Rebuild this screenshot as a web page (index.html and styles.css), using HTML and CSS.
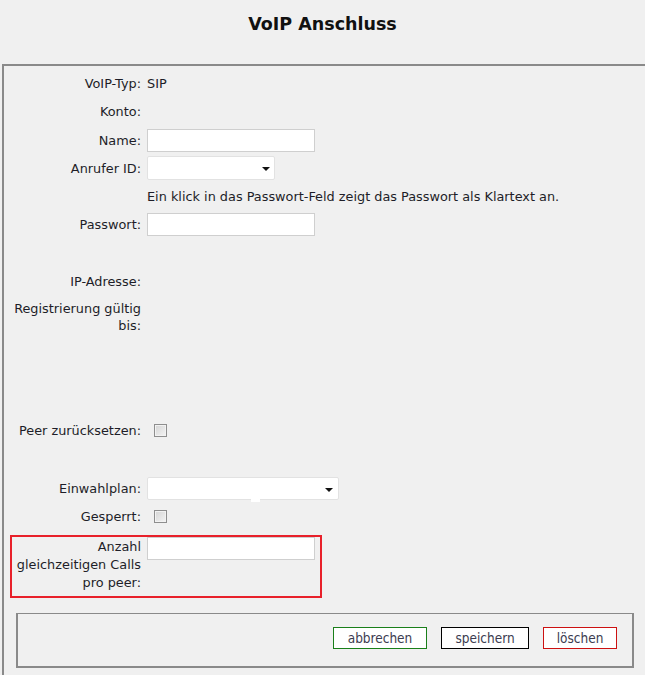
FILE: index.html
```
<!DOCTYPE html>
<html lang="de">
<head>
<meta charset="utf-8">
<title>VoIP Anschluss</title>
<link rel="stylesheet" href="styles.css">
</head>
<body>
<h1 class="title">VoIP Anschluss</h1>
<div class="panel">
  <div class="row"><span class="label">VoIP-Typ:</span><span class="value">SIP</span></div>
  <div class="row row-konto"><span class="label">Konto:</span></div>
  <div class="row"><span class="label">Name:</span><input class="text" type="text"></div>
  <div class="row"><span class="label">Anrufer ID:</span><span class="select sel-short"><span class="arrow"></span></span></div>
  <div class="row"><span class="label"></span><span class="value">Ein klick in das Passwort-Feld zeigt das Passwort als Klartext an.</span></div>
  <div class="row"><span class="label">Passwort:</span><input class="text" type="text"></div>
  <div class="spacer s1"></div>
  <div class="row"><span class="label">IP-Adresse:</span></div>
  <div class="row row-top"><span class="label multi">Registrierung gültig<br>bis:</span></div>
  <div class="spacer s2"></div>
  <div class="row"><span class="label">Peer zurücksetzen:</span><span class="check"></span></div>
  <div class="spacer s3"></div>
  <div class="row"><span class="label">Einwahlplan:</span><span class="select sel-long"><span class="arrow"></span><span class="nub"></span></span></div>
  <div class="row"><span class="label">Gesperrt:</span><span class="check"></span></div>
  <div class="redbox">
    <span class="label multi tall">Anzahl<br>gleichzeitigen Calls<br>pro peer:</span>
    <input class="text" type="text">
  </div>
  <div class="actions">
    <button class="btn btn-cancel" type="button">abbrechen</button>
    <button class="btn btn-save" type="button">speichern</button>
    <button class="btn btn-delete" type="button">löschen</button>
  </div>
</div>
</body>
</html>
```
FILE: styles.css
```
html, body {
  margin: 0;
  padding: 0;
  background: #f0f0f0;
  overflow: hidden;
  height: 675px;
}
body {
  font-family: "DejaVu Sans", sans-serif;
  font-size: 12.85px;
  color: #1e1e28;
}
.title {
  margin: 0;
  height: 64px;
  box-sizing: border-box;
  padding-top: 13px;
  text-align: center;
  font-size: 17.5px;
  line-height: 22px;
  font-weight: bold;
  color: #111;
}
.panel {
  margin-left: 2px;
  margin-right: -30px;
  border: 2px solid #8a8a8a;
  padding: 3px 0 8px 0;
}
.row {
  display: flex;
  align-items: center;
  height: 28px;
  gap: 6px;
}
.row-konto {
  height: 29px;
}
.row-top {
  align-items: flex-start;
  height: auto;
  padding-top: 5px;
}
.label {
  width: 137px;
  flex: none;
  text-align: right;
  white-space: nowrap;
}
.multi {
  line-height: 17px;
}
.tall {
  line-height: 18px;
  width: 129px;
  padding-top: 1px;
}
.spacer.s1 { height: 29px; }
.spacer.s2 { height: 82px; }
.spacer.s3 { height: 30px; }
.text {
  box-sizing: border-box;
  width: 168px;
  height: 23px;
  margin: 0;
  border: 1px solid #cfcfcf;
  background: #fff;
  padding: 0 3px;
  font: inherit;
}
.select {
  position: relative;
  box-sizing: border-box;
  height: 24px;
  border: 1px solid #e2e2e2;
  background: #fff;
  border-radius: 2px;
}
.sel-short { width: 128px; }
.sel-long { width: 192px; height: 23px; }
.arrow {
  position: absolute;
  right: 4px;
  top: 10px;
  width: 0;
  height: 0;
  border-left: 4px solid transparent;
  border-right: 4px solid transparent;
  border-top: 4px solid #111;
}
.sel-long .arrow { right: 5px; }
.nub {
  position: absolute;
  left: 103px;
  bottom: -3px;
  width: 9px;
  height: 3px;
  background: #fff;
}
.check {
  box-sizing: border-box;
  width: 13px;
  height: 13px;
  margin-left: 7px;
  border: 1px solid #8e8e8e;
  background: linear-gradient(135deg, #d4d4d4, #f4f4f4);
  box-shadow: inset 0 0 0 1px #f2f2f2;
}
.redbox {
  display: flex;
  align-items: flex-start;
  gap: 6px;
  box-sizing: border-box;
  width: 312px;
  margin: 5px 0 0 6px;
  border: 2px solid #e8202a;
  padding-bottom: 4px;
}
.actions {
  box-sizing: border-box;
  width: 618px;
  height: 55px;
  margin: 15px 0 0 12px;
  border: 2px solid #8a8a8a;
  border-width: 1px 2px 2px 2px;
  display: flex;
  justify-content: flex-end;
  align-items: flex-start;
  gap: 14px;
  padding: 13px 15px 0 0;
}
.btn {
  box-sizing: border-box;
  height: 22px;
  margin: 0;
  padding: 0;
  background: #fff;
  font-family: "DejaVu Sans Condensed", "DejaVu Sans", sans-serif;
  font-size: 13.5px;
  color: #3c3c50;
  border: 1px solid #000;
  border-radius: 0;
}
.btn-cancel { width: 94px; border-color: #1a7f1a; }
.btn-save { width: 88px; border-color: #000; }
.btn-delete { width: 74px; border-color: #cc1111; }
```
